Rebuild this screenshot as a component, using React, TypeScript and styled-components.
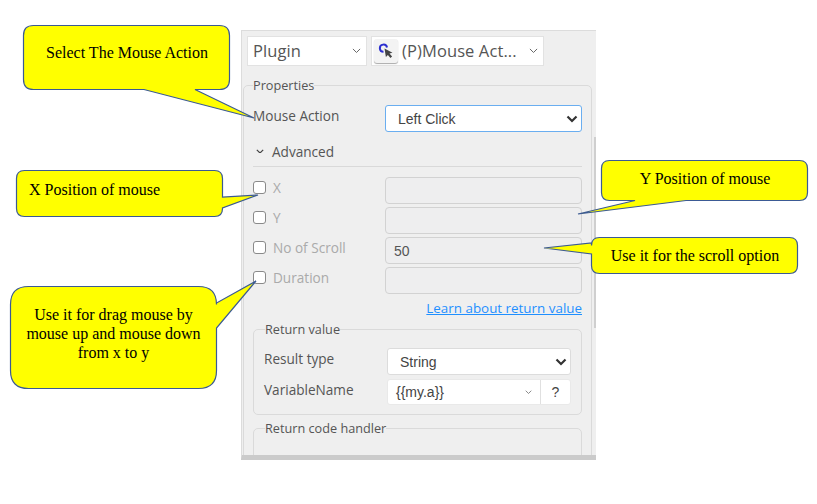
import * as React from 'react';
import styled, { createGlobalStyle } from 'styled-components';

const GlobalStyle = createGlobalStyle`
  html, body {
    margin: 0;
    padding: 0;
    background: #fff;
  }
`;

const Page = styled.div`
  position: relative;
  width: 817px;
  height: 504px;
  overflow: hidden;
  padding: 30px 0 0 241px;
  box-sizing: border-box;
  font-family: 'Open Sans', 'Noto Sans', sans-serif;
`;

const Panel = styled.div`
  position: relative;
  width: 355px;
  height: 430px;
  box-sizing: border-box;
  background: #efefef;
  border-top: 1px solid #dcdcdc;
  border-left: 1px solid #dcdcdc;
  border-bottom: 5px solid #cbcbcb;
  padding: 5px 0 0 1px;
  overflow: hidden;
  color: #444;
`;

const TopRow = styled.div`
  display: flex;
  gap: 4px;
  padding-left: 4px;
`;

const TopSelect = styled.div<{ $width: number }>`
  width: ${(p) => p.$width}px;
  height: 30px;
  box-sizing: border-box;
  display: flex;
  align-items: center;
  background: #fff;
  border: 1px solid #e2e2e2;
  padding: 0 5px 0 5px;
  font-size: 16.5px;
  color: #555;
  letter-spacing: 0.1px;
`;

const TopValue = styled.span`
  flex: 1;
  white-space: nowrap;
  margin-top: -2px;
`;

const IconButton = styled.span`
  width: 24px;
  height: 24px;
  margin: 0 4px 0 -3px;
  display: flex;
  align-items: center;
  justify-content: center;
  background: #f3f3f3;
  border-radius: 3px;
  box-shadow: 0 1px 1px #aaa;
`;

const Group = styled.fieldset<{ $inner?: boolean }>`
  margin: ${(p) => (p.$inner ? '0 0 5px 0' : '11px 0 0 0')};
  width: ${(p) => (p.$inner ? '329px' : '349px')};
  box-sizing: border-box;
  border: 1px solid #dadada;
  border-radius: 5px;
  padding: ${(p) => (p.$inner ? '0 10px 9px 10px' : '0 9px 0 9px')};
  min-width: 0;
`;

const Legend = styled.legend<{ $inner?: boolean }>`
  padding: 0;
  margin-left: ${(p) => (p.$inner ? '1px' : '0')};
  font-size: 12.7px;
  line-height: 16px;
  color: #555;
`;

const Row = styled.div<{ $height: number; $gap?: number }>`
  display: flex;
  align-items: center;
  justify-content: space-between;
  height: ${(p) => p.$height}px;
  margin-top: ${(p) => p.$gap ?? 0}px;
`;

const RowLabel = styled.label<{ $disabled?: boolean }>`
  display: flex;
  align-items: center;
  gap: 7px;
  font-size: 13.6px;
  color: ${(p) => (p.$disabled ? '#aaa' : '#555')};
  transform: translateY(-3px);
`;

const Check = styled.span`
  width: 13px;
  height: 13px;
  box-sizing: border-box;
  border: 1px solid #8a8a8a;
  border-radius: 3px;
  background: #fff;
  display: inline-block;
`;

const NativeLike = styled.div<{ $focus?: boolean; $width: number }>`
  width: ${(p) => p.$width}px;
  height: 27px;
  box-sizing: border-box;
  display: flex;
  align-items: center;
  justify-content: space-between;
  background: #fff;
  border: 1px solid ${(p) => (p.$focus ? '#6aaef0' : '#dcdcdc')};
  border-radius: 3px;
  padding: 0 3px 0 12px;
  font-family: 'Liberation Sans', Arial, sans-serif;
  font-size: 14px;
  color: #444;
`;

const TextField = styled.div`
  width: 197px;
  height: 27px;
  box-sizing: border-box;
  display: flex;
  align-items: center;
  background: #eeeeef;
  border: 1px solid #d2d2d2;
  border-radius: 4px;
  padding: 0 8px;
  font-family: 'Liberation Sans', Arial, sans-serif;
  font-size: 14px;
  color: #555;
`;

const AdvancedHead = styled.div`
  display: flex;
  align-items: center;
  gap: 8px;
  height: 35px;
  box-sizing: border-box;
  padding: 4px 0 0 3px;
  border-bottom: 1px solid #d9d9d9;
  font-size: 13.6px;
  color: #555;
`;

const LinkLine = styled.div`
  display: flex;
  justify-content: flex-end;
  height: 27px;
  align-items: center;
`;

const LearnLink = styled.a`
  color: #1f8fff;
  font-size: 13.4px;
  text-decoration: underline;
`;

const Combo = styled.div`
  width: 184px;
  height: 26px;
  box-sizing: border-box;
  display: flex;
  align-items: center;
  background: #fff;
  border-radius: 3px;
  border: 1px solid #e9e9e9;
  font-family: 'Liberation Sans', Arial, sans-serif;
  font-size: 14px;
  color: #444;
`;

const ComboValue = styled.span`
  flex: 1;
  padding-left: 8px;
`;

const ComboHelp = styled.span`
  width: 29px;
  height: 100%;
  margin-left: 8px;
  display: flex;
  align-items: center;
  justify-content: center;
  border-left: 1px solid #e0e0e0;
`;

const ScrollTrack = styled.div`
  position: absolute;
  right: 0;
  top: 106px;
  width: 2px;
  height: 191px;
  background: #cfcfcf;
`;

const CalloutBox = styled.div<{ $x: number; $y: number; $w: number; $h: number }>`
  position: absolute;
  left: ${(p) => p.$x}px;
  top: ${(p) => p.$y}px;
  width: ${(p) => p.$w}px;
  height: ${(p) => p.$h}px;
`;

const CalloutText = styled.div<{ $left?: number; $top: number }>`
  position: absolute;
  left: ${(p) => p.$left ?? 0}px;
  right: 0;
  top: ${(p) => p.$top}px;
  text-align: ${(p) => (p.$left ? 'left' : 'center')};
  font-family: 'Liberation Serif', 'Times New Roman', serif;
  font-size: 16px;
  line-height: 19px;
  color: #000;
`;

const Overlay = styled.svg`
  position: absolute;
  left: 0;
  top: 0;
`;

const Chevron = ({ size = 9, color = '#666', weight = 1.1 }: { size?: number; color?: string; weight?: number }) => (
  <svg width={size} height={size * 0.6} viewBox="0 0 10 6">
    <path d="M1 1l4 4 4-4" fill="none" stroke={color} strokeWidth={weight} />
  </svg>
);

const BoldChevron = () => (
  <svg width="12" height="8" viewBox="0 0 12 8">
    <path d="M1.5 1.5L6 6l4.5-4.5" fill="none" stroke="#333" strokeWidth="2.2" />
  </svg>
);

const MouseActionIcon = () => (
  <svg width="18" height="18" viewBox="0 0 18 18">
    <path d="M10 5.5A3.6 3.6 0 1 0 6.5 9.8" fill="none" stroke="#2c2fd0" strokeWidth="2" />
    <path d="M7.5 6.5l8 4.2-3 .9 2.6 3-1.7 1.4-2.5-3.1-2 2z" fill="#444" />
  </svg>
);

// shape: rounded box joined with its tail, outer coordinates are page pixels
const calloutPath = (
  x: number,
  y: number,
  w: number,
  h: number,
  r: number,
  side: 'bottom' | 'right' | 'left',
  a: number,
  b: number,
  tx: number,
  ty: number,
): string => {
  const x2 = x + w;
  const y2 = y + h;
  const right = side === 'right' ? `L${x2} ${a}L${tx} ${ty}L${x2} ${b}` : '';
  const bottom = side === 'bottom' ? `L${b} ${y2}L${tx} ${ty}L${a} ${y2}` : '';
  const left = side === 'left' ? `L${x} ${b}L${tx} ${ty}L${x} ${a}` : '';
  return (
    `M${x + r} ${y}L${x2 - r} ${y}Q${x2} ${y} ${x2} ${y + r}${right}L${x2} ${y2 - r}Q${x2} ${y2} ${x2 - r} ${y2}` +
    `${bottom}L${x + r} ${y2}Q${x} ${y2} ${x} ${y2 - r}${left}L${x} ${y + r}Q${x} ${y} ${x + r} ${y}Z`
  );
};

const callouts = [
  calloutPath(23.5, 25.5, 206, 64, 10, 'bottom', 144, 195, 254, 118),
  calloutPath(16.5, 170.5, 206, 46, 8, 'right', 197, 208, 258, 195),
  calloutPath(10.5, 286.5, 206, 102, 18, 'right', 303, 328, 256, 281),
  calloutPath(601.5, 160.5, 206, 40, 8, 'bottom', 635, 686, 578, 214),
  calloutPath(591.5, 237.5, 206, 36, 8, 'left', 243, 254, 544, 248),
];

export default function App(): React.ReactElement {
  return (
    <Page>
      <GlobalStyle />
      <Panel>
        <TopRow>
          <TopSelect $width={120}>
            <TopValue>Plugin</TopValue>
            <Chevron />
          </TopSelect>
          <TopSelect $width={173}>
            <IconButton>
              <MouseActionIcon />
            </IconButton>
            <TopValue>(P)Mouse Act...</TopValue>
            <Chevron />
          </TopSelect>
        </TopRow>
        <Group>
          <Legend>Properties</Legend>
          <Row $height={27} $gap={12}>
            <RowLabel>Mouse Action</RowLabel>
            <NativeLike $focus $width={197}>
              Left Click
              <BoldChevron />
            </NativeLike>
          </Row>
          <AdvancedHead>
            <Chevron size={8} color="#444" weight={1.5} />
            Advanced
          </AdvancedHead>
          <Row $height={27} $gap={10}>
            <RowLabel $disabled>
              <Check />X
            </RowLabel>
            <TextField />
          </Row>
          <Row $height={27} $gap={3}>
            <RowLabel $disabled>
              <Check />Y
            </RowLabel>
            <TextField />
          </Row>
          <Row $height={27} $gap={3}>
            <RowLabel $disabled>
              <Check />No of Scroll
            </RowLabel>
            <TextField>50</TextField>
          </Row>
          <Row $height={27} $gap={3}>
            <RowLabel $disabled>
              <Check />Duration
            </RowLabel>
            <TextField />
          </Row>
          <LinkLine>
            <LearnLink>Learn about return value</LearnLink>
          </LinkLine>
          <Group $inner>
            <Legend $inner>Return value</Legend>
            <Row $height={27} $gap={11}>
              <RowLabel>Result type</RowLabel>
              <NativeLike $width={184}>
                String
                <BoldChevron />
              </NativeLike>
            </Row>
            <Row $height={26} $gap={4}>
              <RowLabel>VariableName</RowLabel>
              <Combo>
                <ComboValue>{'{{my.a}}'}</ComboValue>
                <Chevron size={7} />
                <ComboHelp>?</ComboHelp>
              </Combo>
            </Row>
          </Group>
          <Group $inner>
            <Legend $inner>Return code handler</Legend>
            <Row $height={40} />
          </Group>
        </Group>
        <ScrollTrack />
      </Panel>

      <Overlay width="817" height="504" viewBox="0 0 817 504">
        {callouts.map((d) => (
          <path key={d} d={d} fill="#ffff00" stroke="#3b5a94" strokeWidth="1.2" />
        ))}
      </Overlay>
      <CalloutBox $x={24} $y={26} $w={206} $h={64}>
        <CalloutText $top={17}>Select The Mouse Action</CalloutText>
      </CalloutBox>
      <CalloutBox $x={17} $y={171} $w={206} $h={46}>
        <CalloutText $left={12} $top={9}>X Position of mouse</CalloutText>
      </CalloutBox>
      <CalloutBox $x={11} $y={287} $w={205} $h={102}>
        <CalloutText $top={17.5}>
          Use it for drag mouse by
          <br />
          mouse up and mouse down
          <br />
          from x to y
        </CalloutText>
      </CalloutBox>
      <CalloutBox $x={602} $y={161} $w={206} $h={40}>
        <CalloutText $top={8}>Y Position of mouse</CalloutText>
      </CalloutBox>
      <CalloutBox $x={592} $y={238} $w={206} $h={36}>
        <CalloutText $top={8}>Use it for the scroll option</CalloutText>
      </CalloutBox>
    </Page>
  );
}
